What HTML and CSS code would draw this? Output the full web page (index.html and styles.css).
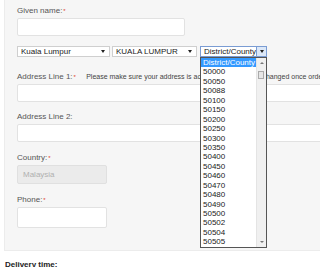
FILE: index.html
```html
<!DOCTYPE html>
<html lang="en">
<head>
    <meta charset="UTF-8">
    <meta name="viewport" content="width=device-width, initial-scale=1.0">
    <title>Shipping address</title>
    <link rel="stylesheet" href="styles.css">
</head>
<body>
    <div class="address-panel">
        <div class="field-label">Given name:<span class="req">*</span></div>
        <div class="text-input name-input"></div>

        <div class="select-row">
            <div class="fake-select state-select">Kuala Lumpur<span class="arrow"></span></div>
            <div class="fake-select city-select">KUALA LUMPUR<span class="arrow"></span></div>
            <div class="fake-select district-select">District/County<span class="arrow-btn"><span class="arrow"></span></span>
                <div class="dropdown-list">
                    <div class="dropdown-items">
                        <div class="dropdown-item selected">District/County</div>
                        <div class="dropdown-item">50000</div>
                        <div class="dropdown-item">50050</div>
                        <div class="dropdown-item">50088</div>
                        <div class="dropdown-item">50100</div>
                        <div class="dropdown-item">50150</div>
                        <div class="dropdown-item">50200</div>
                        <div class="dropdown-item">50250</div>
                        <div class="dropdown-item">50300</div>
                        <div class="dropdown-item">50350</div>
                        <div class="dropdown-item">50400</div>
                        <div class="dropdown-item">50450</div>
                        <div class="dropdown-item">50460</div>
                        <div class="dropdown-item">50470</div>
                        <div class="dropdown-item">50480</div>
                        <div class="dropdown-item">50490</div>
                        <div class="dropdown-item">50500</div>
                        <div class="dropdown-item">50502</div>
                        <div class="dropdown-item">50504</div>
                        <div class="dropdown-item">50505</div>
                    </div>
                    <div class="scrollbar">
                        <span class="scroll-up"></span>
                        <span class="scroll-thumb"></span>
                        <span class="scroll-down"></span>
                    </div>
                </div>
            </div>
        </div>

        <div class="field-label addr-label">Address Line 1:<span class="req">*</span>
            <span class="hint">Please make sure your address is accurate, it cannot be changed once order is placed.</span>
        </div>
        <div class="text-input wide-input"></div>

        <div class="field-label addr-label">Address Line 2:</div>
        <div class="text-input wide-input"></div>

        <div class="field-label country-label">Country:<span class="req">*</span></div>
        <div class="text-input country-input">Malaysia</div>

        <div class="field-label country-label">Phone:<span class="req">*</span></div>
        <div class="text-input phone-input"></div>
    </div>

    <div class="section-title">Delivery time:</div>
</body>
</html>
```

FILE: styles.css
```css
body {
    margin: 0;
    font-family: 'Liberation Sans', Arial, sans-serif;
    background-color: #ffffff;
    overflow: hidden;
    width: 320px;
    height: 267px;
}

.address-panel {
    margin-left: 4px;
    height: 244px;
    padding: 6px 0 0 12px;
    background: #f6f6f6;
    border-left: 1px solid #ececec;
    border-bottom: 1px solid #ececec;
    position: relative;
}

.field-label {
    font-size: 8px;
    line-height: 10px;
    color: #555;
    white-space: nowrap;
}

.req {
    color: #e0401a;
    font-size: 6px;
    vertical-align: top;
    margin-left: 1px;
}

.text-input {
    margin-top: 2px;
    background: #fff;
    border: 1px solid #e2e2e2;
    border-radius: 2px;
    box-sizing: border-box;
    font-size: 8px;
    padding: 0 5px;
}

.name-input {
    width: 168px;
    height: 18px;
}

.select-row {
    display: flex;
    margin-top: 10px;
    height: 11px;
}

.fake-select {
    position: relative;
    box-sizing: border-box;
    height: 11px;
    background: #fff;
    border: 1px solid #cfcfcf;
    font-size: 8px;
    line-height: 9px;
    color: #222;
    padding-left: 3px;
}

.state-select {
    width: 93px;
}

.city-select {
    width: 85px;
    margin-left: 2px;
}

.district-select {
    width: 67px;
    margin-left: 3px;
    border-color: #7a9cd3;
}

.arrow {
    position: absolute;
    right: 4px;
    top: 3px;
    border-left: 2px solid transparent;
    border-right: 2px solid transparent;
    border-top: 3px solid #222;
}

.arrow-btn {
    position: absolute;
    right: 0;
    top: 0;
    width: 9px;
    height: 9px;
    background: #dce8f8;
    border-left: 1px solid #7a9cd3;
}

.arrow-btn .arrow {
    right: 2px;
}

.dropdown-list {
    position: absolute;
    left: -1px;
    top: 10px;
    width: 67px;
    height: 191px;
    box-sizing: border-box;
    border: 1px solid #555;
    background: #fff;
    display: flex;
    z-index: 5;
}

.dropdown-items {
    flex-grow: 1;
}

.dropdown-item {
    height: 9.45px;
    line-height: 9.45px;
    font-size: 8px;
    color: #222;
    padding-left: 2px;
}

.dropdown-item.selected {
    background: #3399ff;
    color: #fff;
}

.scrollbar {
    width: 9px;
    background: #f0f0f0;
    border-left: 1px solid #e4e4e4;
    position: relative;
}

.scroll-up,
.scroll-down {
    position: absolute;
    left: 3px;
    border-left: 2px solid transparent;
    border-right: 2px solid transparent;
}

.scroll-up {
    top: 4px;
    border-bottom: 2px solid #777;
}

.scroll-down {
    bottom: 4px;
    border-top: 2px solid #777;
}

.scroll-thumb {
    position: absolute;
    left: 1px;
    top: 13px;
    width: 6px;
    height: 8px;
    background: #e6e6e6;
    border: 1px solid #aaa;
    box-sizing: border-box;
}

.addr-label {
    margin-top: 15px;
}

.addr-label + .wide-input + .addr-label {
    margin-top: 10px;
}

.hint {
    font-size: 7px;
    color: #444;
    margin-left: 8px;
}

.wide-input {
    width: 400px;
    height: 18px;
}

.country-label {
    margin-top: 11px;
}

.country-input {
    width: 90px;
    height: 19px;
    background: #ebebeb;
    border-color: #e0e0e0;
    color: #b0b0b0;
    line-height: 17px;
}

.phone-input {
    width: 90px;
    height: 21px;
}

.section-title {
    margin: 9px 0 0 5px;
    font-size: 8px;
    font-weight: bold;
    color: #222;
}
```
